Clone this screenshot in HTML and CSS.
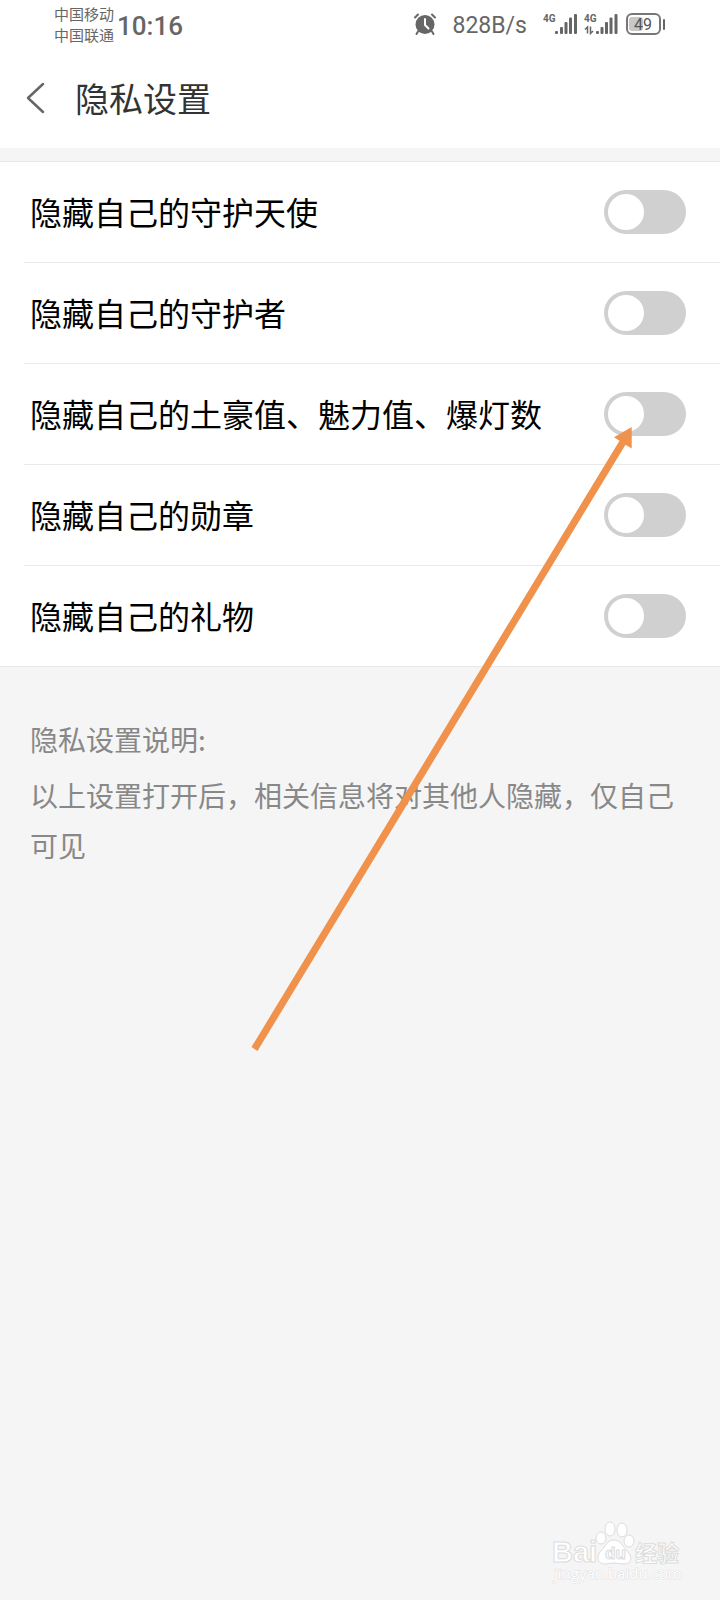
FILE: index.html
```html
<!DOCTYPE html>
<html lang="zh-CN">
<head>
<meta charset="utf-8">
<meta name="viewport" content="width=device-width, initial-scale=1">
<title>隐私设置</title>
<link rel="stylesheet" href="styles.css">
</head>
<body>
<div class="screen">
  <div class="status">
    <div class="carriers"><span>中国移动</span><span>中国联通</span></div>
    <span class="time">10:16</span>
    <div class="indicators">
      <svg class="alarm" width="24" height="24" viewBox="0 0 24 24" aria-hidden="true">
        <circle cx="12" cy="12.500" r="9.500" fill="#666"/>
        <path d="M2 5.500 5 2.500M22 5.500 19 2.500M5 19.500 3.500 22M19 19.500 20.500 22" stroke="#666" stroke-width="2" stroke-linecap="round"/>
        <path d="M12 7v6l3.500 3.500" fill="none" stroke="#fff" stroke-width="2" stroke-linecap="round"/>
      </svg>
      <span class="speed">828B/s</span>
      <svg class="signal" width="76" height="24" viewBox="0 0 76 24" aria-label="4G">
        <g fill="#666">
          <text class="net" x="0" y="10">4G</text>
          <rect x="12" y="19" width="3" height="3" rx="1"/>
          <rect x="17" y="15" width="3" height="7" rx="1"/>
          <rect x="21.500" y="10" width="3" height="12" rx="1"/>
          <rect x="26" y="5.500" width="3" height="16.500" rx="1"/>
          <rect x="31" y="2" width="3" height="20" rx="1"/>
          <text class="net" x="41" y="10">4G</text>
          <rect x="53" y="19" width="3" height="3" rx="1"/>
          <rect x="57.500" y="15" width="3" height="7" rx="1"/>
          <rect x="62" y="10" width="3" height="12" rx="1"/>
          <rect x="66.500" y="5.500" width="3" height="16.500" rx="1"/>
          <rect x="71.500" y="2" width="3" height="20" rx="1"/>
        </g>
        <path d="M42 17.500 44.500 15v6.500M47.500 14.500V21.500L50 19" fill="none" stroke="#666" stroke-width="1.500"/>
      </svg>
      <svg class="battery" width="42" height="24" viewBox="0 0 42 24" aria-label="49%">
        <rect x="4" y="5" width="14" height="14" rx="3" fill="#c8c8c8"/>
        <rect x="2" y="2" width="33" height="20" rx="5" fill="none" stroke="#777" stroke-width="2"/>
        <rect x="38" y="7" width="2" height="11" rx="1" fill="#666"/>
        <text class="level" x="18" y="18" text-anchor="middle" fill="#555">49</text>
      </svg>
    </div>
  </div>

  <header class="header">
    <button class="back" type="button" aria-label="返回">
      <svg width="20" height="32" viewBox="0 0 20 32" aria-hidden="true"><path d="M17 2 2 16 17 30" fill="none" stroke="#666" stroke-width="2.500" stroke-linecap="round" stroke-linejoin="round"/></svg>
    </button>
    <h1 class="title">隐私设置</h1>
  </header>

  <main>
    <div class="list">
      <label class="row"><span class="label">隐藏自己的守护天使</span><input class="switch" type="checkbox" role="switch"></label>
      <label class="row"><span class="label">隐藏自己的守护者</span><input class="switch" type="checkbox" role="switch"></label>
      <label class="row"><span class="label">隐藏自己的土豪值、魅力值、爆灯数</span><input class="switch" type="checkbox" role="switch"></label>
      <label class="row"><span class="label">隐藏自己的勋章</span><input class="switch" type="checkbox" role="switch"></label>
      <label class="row"><span class="label">隐藏自己的礼物</span><input class="switch" type="checkbox" role="switch"></label>
    </div>
    <section class="note">
      <h2 class="note-title">隐私设置说明:</h2>
      <p class="note-text">以上设置打开后，相关信息将对其他人隐藏，仅自己可见</p>
    </section>
  </main>

  <svg class="arrow" width="384" height="628" viewBox="250 426 384 628" aria-hidden="true">
    <path d="M631.700 427 614 437.300 619.500 440.700 251.500 1047 257.500 1051 625.500 444.700 631.700 448.500Z" fill="#f0924c"/>
  </svg>

  <svg class="watermark" width="144" height="68" viewBox="0 0 144 68" aria-label="Baidu 经验">
    <g fill="#fff" stroke="#dcdcdc" stroke-width="1">
      <ellipse cx="61" cy="18" rx="5" ry="6"/>
      <ellipse cx="70" cy="9" rx="5" ry="7"/>
      <ellipse cx="82" cy="10" rx="5" ry="7"/>
      <ellipse cx="89" cy="21" rx="5" ry="6"/>
      <path d="M74 20c7 0 9 7 13 11 6 5 5 13-3 13-4 0-6-1-10-1s-6 1-9 1c-8 0-9-8-4-13 4-4 6-11 13-11Z"/>
      <text class="wm-brand" x="12" y="42">Bai</text>
      <text class="wm-du" x="65" y="39">du</text>
      <text class="wm-cn" x="95" y="41">经验</text>
    </g>
    <text class="wm-url" x="14" y="59">jingyan.baidu.com</text>
  </svg>
</div>
</body>
</html>
```

FILE: styles.css
```css
* {
  box-sizing: border-box;
}

body {
  margin: 0;
  background: #f5f5f5;
  color: #000;
  font-family: "Noto Sans CJK SC", sans-serif;
}

.screen {
  position: relative;
  min-height: 100vh;
}

.status {
  display: flex;
  align-items: center;
  height: 50px;
  padding: 0 53px 2px 54px;
  background: #fff;
  color: #666;
}

.carriers {
  display: flex;
  flex-direction: column;
  font-size: 15px;
  line-height: 21px;
}

.time {
  margin-left: 3px;
  padding-top: 4px;
  font: 500 26px/32px Roboto, sans-serif;
}

.indicators {
  display: flex;
  align-items: center;
  margin-left: auto;
}

.speed {
  margin: 0 16px;
  padding-top: 4px;
  font: 400 23px/32px Roboto, sans-serif;
}

.battery {
  margin-left: 6px;
}

.net {
  font: 700 10px Roboto, sans-serif;
}

.level {
  font: 400 16px Roboto, sans-serif;
}

.header {
  display: flex;
  align-items: center;
  height: 98px;
  padding: 0 26px 2px;
  background: #fff;
}

.back {
  display: flex;
  margin: 0;
  padding: 0;
  border: 0;
  background: none;
}

.title {
  margin: 0 0 0 29px;
  color: #333;
  font-size: 34px;
  font-weight: 400;
  line-height: 48px;
}

.list {
  margin-top: 13px;
  padding-left: 24px;
  border-top: 1px solid #e8e8e8;
  border-bottom: 1px solid #e8e8e8;
  background: #fff;
}

.row {
  display: flex;
  align-items: center;
  justify-content: space-between;
  min-height: 100px;
  padding: 0 34px 0 6px;
  font-size: 32px;
  line-height: 48px;
}

.row + .row {
  min-height: 101px;
  border-top: 1px solid #ebebeb;
}

.label {
  padding-bottom: 2px;
}

.switch {
  flex: none;
  width: 82px;
  height: 44px;
  margin: 0;
  padding: 4px;
  border-radius: 22px;
  background: #d0d0d0;
  appearance: none;
}

.switch::before {
  content: "";
  display: block;
  width: 36px;
  height: 36px;
  border-radius: 50%;
  background: #fff;
}

.switch:checked::before {
  margin-left: auto;
}

.note {
  padding: 47px 30px;
  color: #888;
  font-size: 28px;
  line-height: 50px;
}

.note-title {
  margin: 0 0 6px;
  font-size: 28px;
  font-weight: 400;
}

.note-text {
  margin: 0;
}

.arrow {
  position: absolute;
  top: 426px;
  left: 250px;
  pointer-events: none;
}

.watermark {
  position: absolute;
  right: 36px;
  bottom: 12px;
}

.wm-brand {
  font: 700 29px "Liberation Sans", sans-serif;
}

.wm-du {
  font: 700 17px "Liberation Sans", sans-serif;
}

.wm-cn {
  font: 700 22px "Noto Sans CJK SC", sans-serif;
}

.wm-url {
  fill: #fff;
  stroke: #e0e0e0;
  stroke-width: 1px;
  paint-order: stroke;
  font: 400 15px "Open Sans", sans-serif;
}
```
